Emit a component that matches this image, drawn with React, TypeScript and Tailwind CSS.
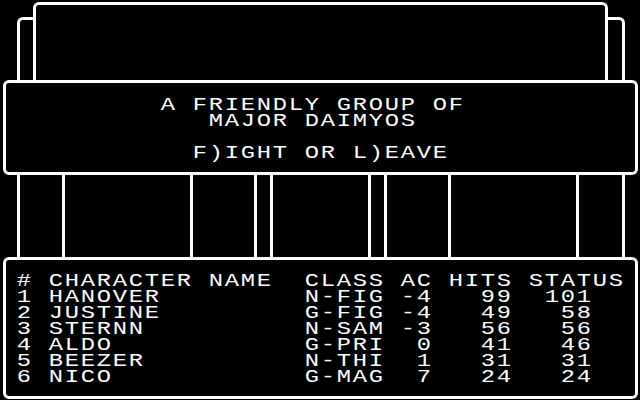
import React from 'react';

const party = [
  { n: '1', name: 'HANOVER', cls: 'N-FIG', ac: '-4', hits: '99', status: '101' },
  { n: '2', name: 'JUSTINE', cls: 'G-FIG', ac: '-4', hits: '49', status: '58' },
  { n: '3', name: 'STERNN', cls: 'N-SAM', ac: '-3', hits: '56', status: '56' },
  { n: '4', name: 'ALDO', cls: 'G-PRI', ac: '0', hits: '41', status: '46' },
  { n: '5', name: 'BEEZER', cls: 'N-THI', ac: '1', hits: '31', status: '31' },
  { n: '6', name: 'NICO', cls: 'G-MAG', ac: '7', hits: '24', status: '24' },
];

// one text row on the 16x16 character grid (12.8px cells stretched 1.25x)
function Row({ text }: { text: string }) {
  return (
    <div className="flex h-[16px] w-max origin-left scale-x-[1.25]">
      {text.split('').map((ch, i) => (
        <span
          key={i}
          className="inline-block h-[16px] w-[12.8px] shrink-0 text-center leading-[16px]"
        >
          {ch}
        </span>
      ))}
    </div>
  );
}

// vertical rules of the band between the two boxes
const band = [45, 128, 64, 16, 98, 16, 64, 128];

export default function App() {
  return (
    <div className="flex h-[400px] w-[640px] flex-col overflow-hidden bg-black font-['Liberation_Mono',monospace] text-[19px] text-white">
      {/* Stacked windows */}
      <div className="flex h-[80px] items-end pl-[17px]">
        <div className="h-[63px] w-[16px] rounded-tl-[6px] border-l-[3px] border-t-[3px] border-white" />
        <div className="h-[78px] w-[575px] rounded-t-[6px] border-x-[3px] border-t-[3px] border-white" />
        <div className="h-[63px] w-[17px] rounded-tr-[6px] border-r-[3px] border-t-[3px] border-white" />
      </div>

      {/* Encounter message */}
      <div className="ml-[3px] h-[95px] w-[635px] rounded-[6px] border-[3px] border-white pl-[10px] pt-[14px]">
        <Row text="         A FRIENDLY GROUP OF" />
        <Row text="            MAJOR DAIMYOS" />
        <Row text=" " />
        <Row text="           F)IGHT OR L)EAVE" />
      </div>

      {/* Band */}
      <div className="ml-[17px] flex h-[82px]">
        {band.map((w, i) => (
          <div key={i} className="h-full shrink-0 border-l-[3px] border-white" style={{ width: w }} />
        ))}
        <div className="h-full w-[49px] shrink-0 border-x-[3px] border-white" />
      </div>

      {/* Party roster */}
      <div className="ml-[3px] h-[142px] w-[635px] rounded-[6px] border-[3px] border-white pl-[10px] pt-[13px]">
        <Row text="# CHARACTER NAME  CLASS AC HITS STATUS" />
        {party.map(p => (
          <Row
            key={p.n}
            text={`${p.n} ${p.name.padEnd(16)}${p.cls} ${p.ac.padStart(2)} ${p.hits.padStart(4)} ${p.status.padStart(4)}`}
          />
        ))}
      </div>
    </div>
  );
}
